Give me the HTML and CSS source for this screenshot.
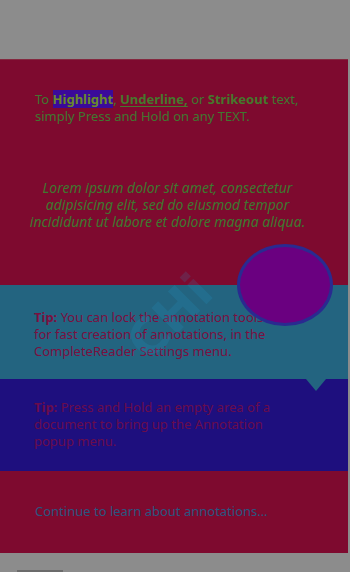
FILE: index.html
```html
<!DOCTYPE html>
<html>
<head>
<meta charset="utf-8">
<link rel="stylesheet" href="styles.css">
</head>
<body>
<div class="page">
  <section class="intro">
    <p class="lead">To <b class="hl">Highlight</b>, <b class="ul">Underline,</b> or <b>Strikeout</b> text, simply Press and Hold on any TEXT.</p>
    <p class="lorem">Lorem ipsum dolor sit amet, consectetur adipisicing elit, sed do eiusmod tempor incididunt ut labore et dolore magna aliqua.</p>
  </section>
  <section class="tip1">
    <p><b>Tip:</b> You can lock the annotation tools for fast creation of annotations, in the CompleteReader Settings menu.</p>
  </section>
  <section class="tip2">
    <p><b>Tip:</b> Press and Hold an empty area of a document to bring up the Annotation popup menu.</p>
  </section>
  <section class="outro">
    <p>Continue to learn about annotations…</p>
  </section>
  <div class="watermark">CHi</div>
  <div class="bubble"></div>
</div>
<div class="handle"></div>
</body>
</html>
```

FILE: styles.css
```css
html, body {
  margin: 0;
  padding: 0;
}
body {
  background: #8c8c8c;
  width: 350px;
  height: 572px;
  overflow: hidden;
  font-family: "Noto Sans", "Open Sans", sans-serif;
  font-size: 13px;
  line-height: 17px;
}
p { margin: 0; }
.page {
  position: relative;
  margin-top: 59px;
  width: 348px;
  height: 494px;
  overflow: hidden;
  border-top: 1px solid #84283f;
  box-sizing: border-box;
}
.intro {
  background: #7e0a2f;
  height: 225px;
  padding: 31px 34px 0 35px;
  box-sizing: border-box;
  color: #3f782f;
}
.lead b { font-weight: 700; color: #46782c; }
.hl {
  background: #3a0a9a;
  color: #6a8a2a !important;
}
.ul {
  text-decoration: underline;
  text-underline-offset: 2px;
}
.lorem {
  margin-top: 54px;
  font-style: italic;
  font-size: 14px;
  text-align: center;
  margin-left: -14px;
  margin-right: 0;
}
.tip1 {
  background: #236480;
  height: 94px;
  padding: 24px 80px 0 34px;
  box-sizing: border-box;
  color: #7a1040;
  position: relative;
}
.tip1::after {
  content: "";
  position: absolute;
  right: 22px;
  bottom: -12px;
  border-left: 10px solid transparent;
  border-right: 10px solid transparent;
  border-top: 12px solid #236480;
  z-index: 2;
}
.tip2 {
  background: #1e0f7e;
  height: 92px;
  padding: 20px 70px 0 34px;
  box-sizing: border-box;
  color: #6a0c4c;
}
.tip1 b, .tip2 b { font-weight: 700; }
.outro {
  background: #7e0a2f;
  height: 82px;
  padding: 32px 34px 0 35px;
  box-sizing: border-box;
  color: #2a5680;
}
.watermark {
  position: absolute;
  left: 122px;
  top: 232px;
  font-family: "DejaVu Sans", sans-serif;
  font-weight: 700;
  font-size: 50px;
  line-height: 50px;
  color: rgba(40, 160, 210, 0.16);
  transform: rotate(-45deg);
  pointer-events: none;
}
.bubble {
  position: absolute;
  left: 237px;
  top: 184px;
  width: 90px;
  height: 76px;
  border-radius: 50%;
  background: #6a0080;
  border: 3px solid #2a2a90;
}
.handle {
  margin: 17px 0 0 17px;
  width: 46px;
  height: 2px;
  background: #6b6b6b;
}
```
